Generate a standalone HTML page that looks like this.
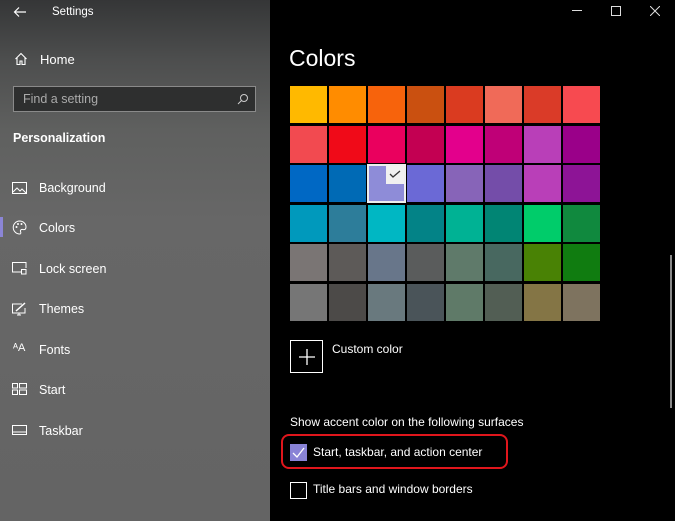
<!DOCTYPE html>
<html><head><meta charset="utf-8"><style>
*{margin:0;padding:0;box-sizing:border-box}
body{width:675px;height:521px;overflow:hidden;background:#000;font-family:"Liberation Sans",sans-serif;position:relative;color:#fff}
#side{position:absolute;left:0;top:0;width:270px;height:521px;background:linear-gradient(180deg,#353637 0px,#4d4e4e 60px,#5f605f 130px,#676767 220px,#646464 521px)}
.t{position:absolute;font-size:12.5px;color:#fff;white-space:nowrap}
.ic{position:absolute}
.sw{position:absolute;width:37px;height:37px}
#main .t{font-size:12px}
</style></head><body>
<div id="side">
  <svg class="ic" style="left:13px;top:6px" width="14" height="12" viewBox="0 0 14 12"><path d="M13 6H2M6 1.5L1.5 6L6 10.5" stroke="#fff" stroke-width="1.2" fill="none"/></svg>
  <div class="t" style="left:52px;top:6px;font-size:11.5px">Settings</div>
  <svg class="ic" style="left:14px;top:52px" width="14" height="14" viewBox="0 0 14 14"><path d="M1.5 7L7 1.5L12.5 7M3 5.5V12.5H6V9H8V12.5H11V5.5" stroke="#fff" stroke-width="1.1" fill="none"/></svg>
  <div class="t" style="left:40px;top:52px;font-size:13px">Home</div>
  <div style="position:absolute;left:13px;top:86px;width:243px;height:26px;border:1.5px solid #8a8a8a;background:#2e2f2f"></div>
  <div class="t" style="left:23px;top:92px;color:#aaa;font-size:12.5px">Find a setting</div>
  <svg class="ic" style="left:237px;top:93px" width="12" height="12" viewBox="0 0 12 12"><circle cx="7" cy="5" r="3.5" stroke="#ccc" fill="none"/><path d="M4.5 7.5L1 11" stroke="#ccc"/></svg>
  <div class="t" style="left:13px;top:131px;font-weight:bold;font-size:12.5px">Personalization</div>
  <svg class="ic" style="left:12px;top:182px" width="15" height="12" viewBox="0 0 15 12"><rect x="0.5" y="0.5" width="14" height="11" stroke="#fff" fill="none"/><path d="M1 10L5 6L8 9L10 7L14 11" stroke="#fff" fill="none"/></svg>
  <div class="t" style="left:39px;top:181px">Background</div>
  <div style="position:absolute;left:0;top:217px;width:3px;height:20px;background:#8b85d6"></div>
  <svg class="ic" style="left:12px;top:220px" width="15" height="15" viewBox="0 0 15 15"><path d="M7.5 1A6.5 6.5 0 1 0 8 14C9 14 9 12.5 8.5 11.5C8 10 9.5 9 11 9.5C13 10 14 9 14 7A6.5 6 0 0 0 7.5 1Z" stroke="#fff" fill="none"/><circle cx="4.5" cy="7" r="1" fill="#fff"/><circle cx="6" cy="4" r="1" fill="#fff"/><circle cx="9.5" cy="4" r="1" fill="#fff"/></svg>
  <div class="t" style="left:39px;top:221px">Colors</div>
  <svg class="ic" style="left:12px;top:262px" width="15" height="13" viewBox="0 0 15 13"><path d="M9 10H0.5V0.5H14V6" stroke="#fff" fill="none"/><rect x="9.5" y="7.5" width="4.5" height="4.5" stroke="#fff" fill="none"/></svg>
  <div class="t" style="left:39px;top:262px">Lock screen</div>
  <svg class="ic" style="left:12px;top:302px" width="15" height="14" viewBox="0 0 15 14"><path d="M10 2H0.5V11H13V6M5 13H9M7 11V13" stroke="#fff" fill="none"/><path d="M4 9L13 1" stroke="#fff" stroke-width="1.5"/></svg>
  <div class="t" style="left:39px;top:302px">Themes</div>
  <div class="t" style="left:13px;top:342px;font-size:11px">ᴬA</div>
  <div class="t" style="left:39px;top:343px">Fonts</div>
  <svg class="ic" style="left:12px;top:383px" width="15" height="12" viewBox="0 0 15 12"><rect x="0.5" y="0.5" width="5" height="4.5" stroke="#fff" fill="none"/><rect x="7.5" y="0.5" width="7" height="4.5" stroke="#fff" fill="none"/><rect x="0.5" y="7" width="5" height="4.5" stroke="#fff" fill="none"/><rect x="7.5" y="7" width="7" height="4.5" stroke="#fff" fill="none"/></svg>
  <div class="t" style="left:39px;top:383px">Start</div>
  <svg class="ic" style="left:12px;top:425px" width="15" height="10" viewBox="0 0 15 10"><rect x="0.5" y="0.5" width="14" height="9" stroke="#fff" fill="none"/><path d="M1 7H14" stroke="#fff"/></svg>
  <div class="t" style="left:39px;top:424px">Taskbar</div>
</div>
<div id="main">
  <svg class="ic" style="left:572px;top:10px" width="10" height="2"><rect width="10" height="1" fill="#ddd"/></svg>
  <svg class="ic" style="left:611px;top:6px" width="10" height="10"><rect x="0.5" y="0.5" width="9" height="9" stroke="#ddd" fill="none"/></svg>
  <svg class="ic" style="left:650px;top:6px" width="10" height="10"><path d="M0 0L10 10M10 0L0 10" stroke="#ddd"/></svg>
  <div class="t" style="left:289px;top:45px;font-size:23px">Colors</div>
  <div id="grid"></div>
  <div style="position:absolute;left:290px;top:340px;width:33px;height:33px;border:1.5px solid #fff"></div>
  <svg class="ic" style="left:297px;top:347px" width="20" height="20"><path d="M10 2V18M2 10H18" stroke="#fff" stroke-width="1.3"/></svg>
  <div class="t" style="left:332px;top:342px">Custom color</div>
  <div class="t" style="left:290px;top:415px">Show accent color on the following surfaces</div>
  <div style="position:absolute;left:281px;top:434px;width:227px;height:35px;border:2.5px solid #e0161c;border-radius:8px"></div>
  <div style="position:absolute;left:290px;top:444px;width:17px;height:17px;background:#8983d6"></div>
  <svg class="ic" style="left:290px;top:444px" width="17" height="17"><path d="M3 9L7 13L14 4" stroke="#fff" stroke-width="1.3" fill="none"/></svg>
  <div class="t" style="left:313px;top:445px">Start, taskbar, and action center</div>
  <div style="position:absolute;left:290px;top:482px;width:17px;height:17px;border:1.5px solid #fff"></div>
  <div class="t" style="left:313px;top:482px">Title bars and window borders</div>
  <div style="position:absolute;left:670px;top:255px;width:2px;height:153px;background:#888"></div>
</div>
<script>
var c=[
["#ffb900","#ff8c00","#f7630c","#ca5010","#da3b20","#f06a58","#da3b28","#f74a50"],
["#f24a50","#f00a18","#ea005e","#c30052","#e3008c","#bf0077","#b93fb8","#9a0089"],
["#0068c4","#006ab5","#8e8cd8","#6b69d6","#8764b8","#744da9","#b93fb8","#8d1496"],
["#0099bc","#2d7d9a","#00b7c3","#038387","#00b294","#018574","#00cc6a","#10893e"],
["#7a7574","#5d5a58","#68768a","#5a5c5c","#5f7a6a","#486860","#498205","#107c10"],
["#767676","#4c4a48","#69797e","#4a5459","#5f7a68","#525e54","#847545","#7e735f"]];
var ys=[86,126,165,205,244,284],h="";
for(var r=0;r<6;r++)for(var i=0;i<8;i++){h+='<div class="sw" style="left:'+(290+i*39)+'px;top:'+ys[r]+'px;background:'+c[r][i]+'"></div>';}
h+='<div class="sw" style="left:367px;top:164px;width:39px;height:39px;border:2px solid #eee;background:#8e8cd8"></div>';
h+='<div class="sw" style="left:386px;top:166px;width:18px;height:18px;background:#f0f0f0"></div>';
h+='<svg class="ic" style="left:388px;top:168px" width="14" height="12"><path d="M2 6L5 9L12 3" stroke="#333" stroke-width="1.3" fill="none"/></svg>';
document.getElementById("grid").innerHTML=h;
</script>
</body></html>
